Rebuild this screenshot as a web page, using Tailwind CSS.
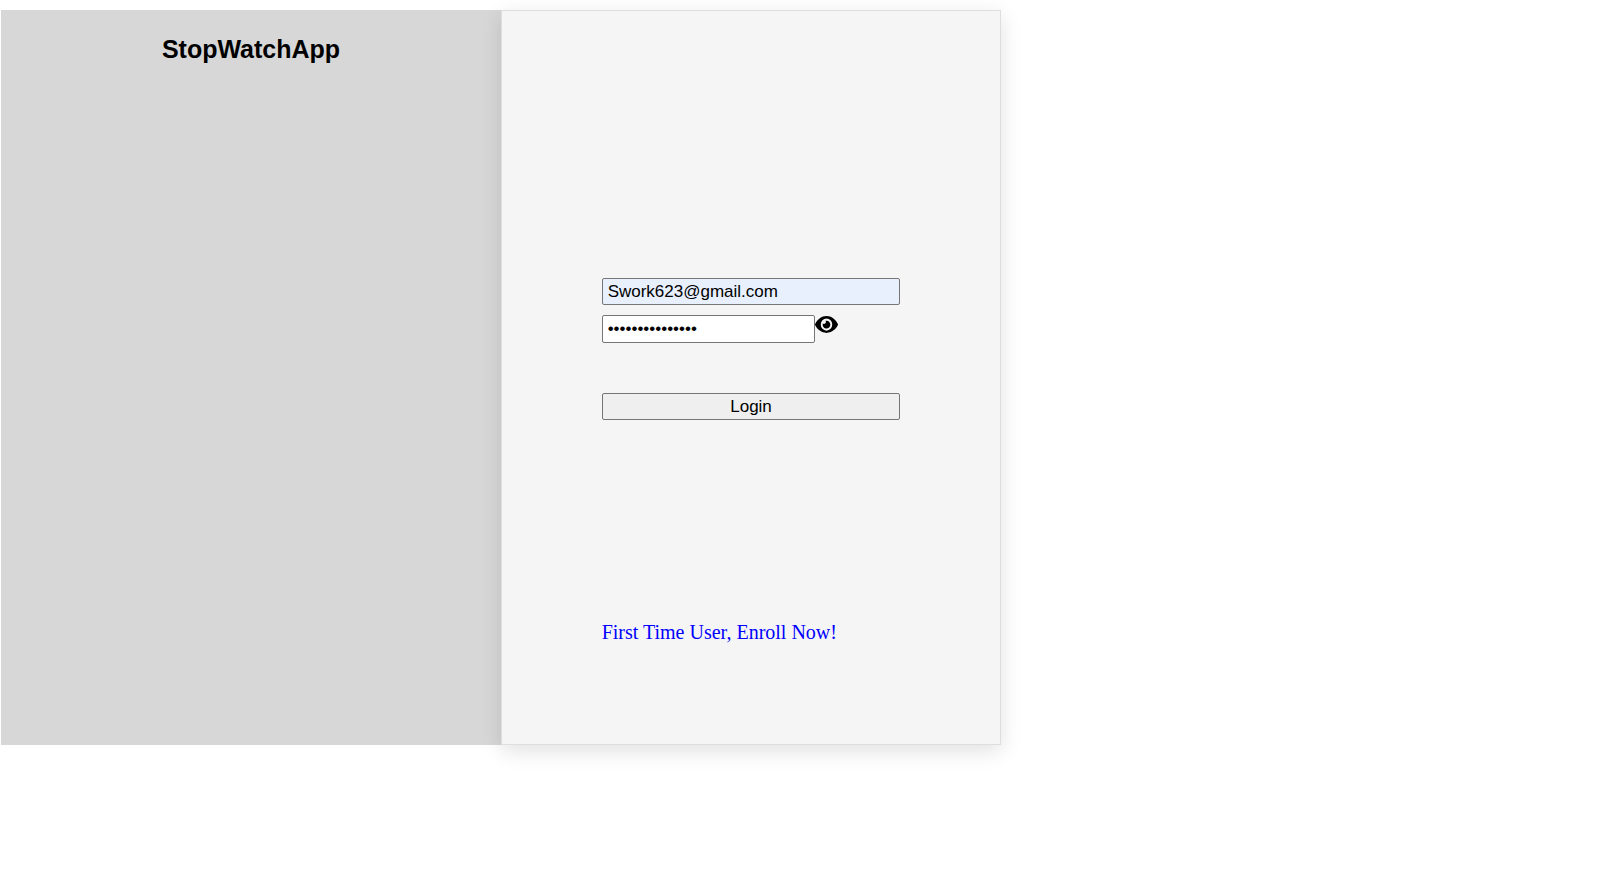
<!DOCTYPE html>
<html lang="en">
<head>
<meta charset="utf-8">
<meta name="viewport" content="width=device-width, initial-scale=1">
<title>StopWatchApp</title>
<script src="https://cdn.jsdelivr.net/npm/@tailwindcss/browser@4"></script>
</head>
<body class="min-h-screen bg-white font-['Liberation_Sans',Arial,sans-serif] text-black">
<main class="flex w-[62.1%] pl-px pt-2.5">
  <header class="w-1/2 bg-[#d7d7d7] pt-[25px]">
    <h1 class="text-center text-[25px] leading-7 font-bold">StopWatchApp</h1>
  </header>
  <section class="relative w-1/2 border border-[#dedede] bg-[#f5f5f5] pt-[267px] pb-[100px] shadow-[0_6px_20px_rgba(0,0,0,0.12)]">
    <form class="mx-auto flex w-3/5 flex-col">
      <input type="email" aria-label="Email" value="Swork623@gmail.com" class="h-[27px] w-full rounded-xs border border-[#767676] bg-[#e8f0fe] px-[5px] text-[17px] leading-5 outline-none">
      <div class="mt-2.5 flex items-start">
        <input type="password" aria-label="Password" value="stopwatch123456" class="h-7 w-[213px] rounded-xs border border-[#767676] bg-white px-[5px] text-[17px] leading-5 outline-none">
        <button type="button" aria-label="Show password">
          <svg class="block h-5 w-[23px]" viewBox="0 0 576 512" preserveAspectRatio="none" fill="currentColor" aria-hidden="true"><path d="M572.52 230C518.29 113 410.93 28 288 28S57.68 113 3.48 230a32.35 32.35 0 0 0 0 29.19C57.71 376 165.07 458 288 458s230.32-82 284.52-198.81a32.35 32.35 0 0 0 0-29.19zM288 400a144 154 0 1 1 144-154 143.93 154 0 0 1-144 154zm0-255a95.31 100 0 0 0-25.31 4 47.85 50 0 0 1-66.9 70A95.78 101 0 1 0 288 145z"/></svg>
        </button>
      </div>
      <button type="button" class="mt-[50px] h-[27px] w-full rounded-xs border border-[#767676] bg-[#efefef] text-[17px] leading-5">Login</button>
      <a href="#enroll" class="mt-[200px] self-start font-['Liberation_Serif','Times_New_Roman',serif] text-[20px] leading-6 text-[#0000ff]">First Time User, Enroll Now!</a>
    </form>
  </section>
</main>
</body>
</html>
